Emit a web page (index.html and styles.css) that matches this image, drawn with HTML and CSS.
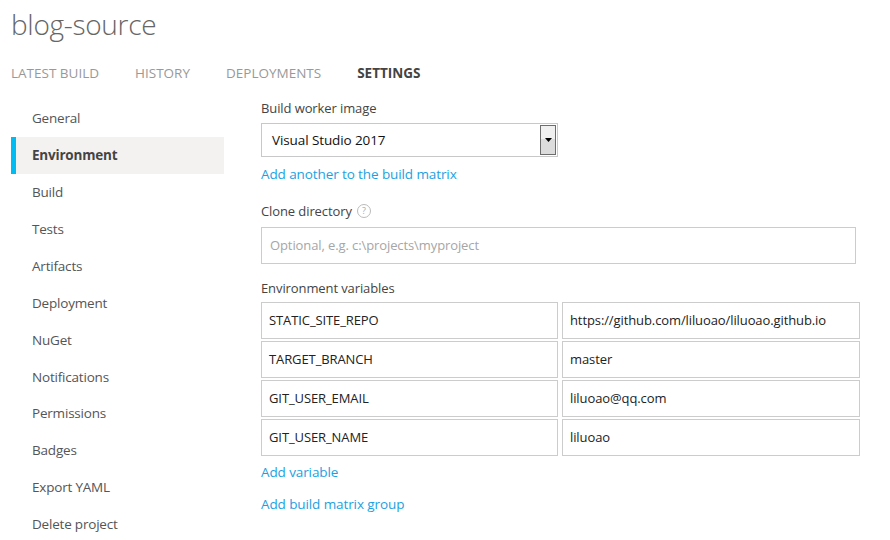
FILE: index.html
```html
<!DOCTYPE html>
<html>
<head>
<meta charset="utf-8">
<link rel="stylesheet" href="styles.css">
</head>
<body>
<header class="head">
  <h1 class="title">blog-source</h1>
  <nav class="tabs">
    <a class="tab">LATEST BUILD</a>
    <a class="tab">HISTORY</a>
    <a class="tab">DEPLOYMENTS</a>
    <a class="tab tab-active">SETTINGS</a>
  </nav>
</header>
<div class="layout">
  <aside class="side">
    <a class="side-item">General</a>
    <a class="side-item side-active">Environment</a>
    <a class="side-item">Build</a>
    <a class="side-item">Tests</a>
    <a class="side-item">Artifacts</a>
    <a class="side-item">Deployment</a>
    <a class="side-item">NuGet</a>
    <a class="side-item">Notifications</a>
    <a class="side-item">Permissions</a>
    <a class="side-item">Badges</a>
    <a class="side-item">Export YAML</a>
    <a class="side-item">Delete project</a>
  </aside>
  <main class="main">
    <div class="label">Build worker image</div>
    <div class="select">
      <span class="select-text">Visual Studio 2017</span>
      <span class="select-btn"><svg width="7" height="4" viewBox="0 0 7 4"><path d="M0 0H7L3.5 4Z" fill="#000"/></svg></span>
    </div>
    <a class="link link-first">Add another to the build matrix</a>
    <div class="label label-clone">Clone directory <span class="help">?</span></div>
    <div class="input placeholder">Optional, e.g. c:\projects\myproject</div>
    <div class="label label-env">Environment variables</div>
    <div class="vars">
      <div class="cell">STATIC_SITE_REPO</div><div class="cell">https://github.com/liluoao/liluoao.github.io</div>
      <div class="cell">TARGET_BRANCH</div><div class="cell">master</div>
      <div class="cell">GIT_USER_EMAIL</div><div class="cell">liluoao@qq.com</div>
      <div class="cell">GIT_USER_NAME</div><div class="cell">liluoao</div>
    </div>
    <a class="link link-var">Add variable</a>
    <a class="link link-group">Add build matrix group</a>
  </main>
</div>
</body>
</html>
```
FILE: styles.css
```css
* { box-sizing: border-box; }
body {
  margin: 0;
  background: #fff;
  font-family: "Open Sans", "Noto Sans", sans-serif;
  font-size: 13px;
  color: #333;
}
.head { padding: 0 0 0 11px; }
.title {
  margin: 0;
  padding-top: 4px;
  font-size: 28px;
  font-weight: 300;
  color: #666;
  line-height: 40px;
  letter-spacing: -0.3px;
}
.tabs {
  display: flex;
  margin-top: 18px;
  height: 22px;
  align-items: center;
}
.tab {
  font-size: 13.5px;
  color: #999;
  margin-right: 36px;
  letter-spacing: 0;
}
.tab-active { color: #444; font-weight: 700; }
.layout {
  display: flex;
  margin-top: 15px;
}
.side {
  width: 224px;
  padding-left: 11px;
  padding-top: 1px;
  display: flex;
  flex-direction: column;
  flex-shrink: 0;
}
.side-item {
  height: 37px;
  line-height: 37px;
  padding-left: 21px;
  font-size: 13.5px;
  color: #555;
  letter-spacing: -0.2px;
}
.side-item:nth-child(n+6) { height: 36.8px; line-height: 36.8px; }
.side-active {
  background: #f3f2f1;
  border-left: 5px solid #00bcf2;
  padding-left: 16px;
  font-weight: 700;
  color: #444;
}
.main {
  padding-left: 37px;
  display: flex;
  flex-direction: column;
  align-items: flex-start;
  padding-top: 0;
}
.label {
  font-size: 13px;
  color: #444;
  line-height: 18px;
  letter-spacing: -0.1px;
}
.select {
  margin-top: 6px;
  width: 297px;
  height: 34px;
  border: 1px solid #c8c8c8;
  display: flex;
  align-items: center;
  justify-content: space-between;
  padding: 1px 1px 1px 10px;
}
.select-text { color: #111; font-size: 13.5px; letter-spacing: -0.1px; }
.select-btn {
  width: 16px;
  height: 100%;
  border: 1px solid #6d6d6d;
  background: linear-gradient(#f0f0f0 0 45%, #dcdcdc 45% 100%);
  display: flex;
  align-items: center;
  justify-content: center;
}
.link {
  color: #1ba1e2;
  font-size: 13.5px;
  line-height: 18px;
  letter-spacing: -0.1px;
}
.link-first { margin-top: 8px; }
.label-clone { margin-top: 19px; display: flex; align-items: center; gap: 5px; }
.help {
  width: 14px;
  height: 14px;
  border: 1px solid #bbb;
  border-radius: 50%;
  color: #aaa;
  font-size: 9px;
  line-height: 12px;
  text-align: center;
}
.input {
  margin-top: 7px;
  width: 595px;
  height: 37px;
  border: 1px solid #ccc;
  padding-left: 8px;
  line-height: 35px;
  font-size: 13px;
}
.placeholder { color: #a6a6a6; letter-spacing: -0.1px; }
.label-env { margin-top: 15px; }
.vars {
  margin-top: 5px;
  display: grid;
  grid-template-columns: 297px 298px;
  gap: 2px 4px;
}
.cell {
  height: 37px;
  border: 1px solid #ccc;
  padding-left: 7px;
  line-height: 35px;
  color: #222;
  font-size: 13px;
  letter-spacing: -0.1px;
}
.link-var { margin-top: 7px; }
.link-group { margin-top: 14px; }
```
